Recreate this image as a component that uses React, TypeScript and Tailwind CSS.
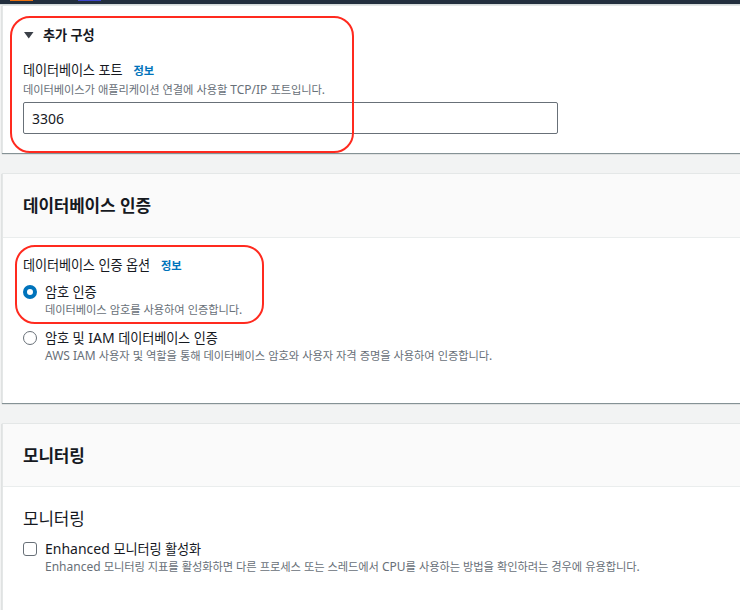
import React from "react";

function K({ t }: { t: string }) {
  const parts = t.split(/([\uAC00-\uD7A3]+)/);
  return (
    <span>
      {parts.map((p, i) =>
        /[\uAC00-\uD7A3]/.test(p) ? (
          <span key={i} className="text-[0.94em] tracking-[-0.01em]">
            {p}
          </span>
        ) : (
          <React.Fragment key={i}>{p}</React.Fragment>
        )
      )}
    </span>
  );
}

function Info() {
  return (
    <span className="ml-[11px] text-[12px] font-bold text-[#0073bb]">
      <K t="정보" />
    </span>
  );
}

const card =
  "relative ml-[2px] bg-white border-t border-l border-[#e4e7e7] shadow-[0_1px_1px_0_rgba(0,28,36,0.45)]";

export default function App() {
  return (
    <div
      className="min-h-screen w-[740px] overflow-hidden bg-[#f2f3f3] text-[#16191f]"
      style={{ fontFamily: '"Noto Sans", "Noto Sans CJK KR", sans-serif' }}
    >
      {/* top bar */}
      <div className="flex h-[4px] items-start bg-[#232f3e]">
        <div className="ml-[10px] h-[1px] w-[23px] bg-[#ec7211]" />
        <div className="ml-[45px] h-[1px] w-[23px] bg-[#3f48cc]" />
      </div>
      <div className="h-[1px] bg-[#d5dbdb]" />

      {/* Card 1: additional config */}
      <section className={card + " pl-[20px] pt-[19px] pb-[19px]"}>
        <div className="flex h-[20px] items-center text-[14px] font-bold leading-[20px]">
          <svg width="10" height="7" viewBox="0 0 10 7" className="ml-[1px] mr-[9px]">
            <path d="M0 0 H9.5 L4.75 6.5 Z" fill="#3b4048" />
          </svg>
          <K t="추가 구성" />
        </div>
        <div className="mt-[15px] flex items-baseline text-[14px] leading-[20px]">
          <K t="데이터베이스 포트" />
          <Info />
        </div>
        <div className="mt-[1px] text-[12px] leading-[16px] text-[#687078]">
          <K t="데이터베이스가 애플리케이션 연결에 사용할 TCP/IP 포트입니다." />
        </div>
        <div className="mt-[4px] flex h-[32px] w-[535px] items-center rounded-[2px] border border-[#687078] px-[8px] text-[14px]">
          3306
        </div>
        <div className="pointer-events-none absolute left-[7px] top-[10px] h-[137px] w-[344px] rounded-[20px] border-2 border-[#ff2a1f]" />
      </section>

      {/* Card 2: DB auth */}
      <section className={card + " mt-[20px]"}>
        <div className="flex h-[64px] items-center border-b border-[#eaeded] bg-[#fafafa] pl-[20px] text-[18px] font-bold">
          <K t="데이터베이스 인증" />
        </div>
        <div className="pl-[20px] pt-[17px] pb-[39px]">
          <div className="flex items-baseline text-[14px] leading-[20px]">
            <K t="데이터베이스 인증 옵션" />
            <Info />
          </div>
          <div className="mt-[6px] flex items-center text-[14px] leading-[20px]">
            <span className="mr-[8px] box-border h-[14px] w-[14px] rounded-full border-[4px] border-[#0073bb] bg-white" />
            <K t="암호 인증" />
          </div>
          <div className="pl-[22px] text-[12px] leading-[16px] text-[#687078]">
            <K t="데이터베이스 암호를 사용하여 인증합니다." />
          </div>
          <div className="mt-[10px] flex items-center text-[14px] leading-[20px]">
            <span className="mr-[8px] box-border h-[14px] w-[14px] rounded-full border-[1.5px] border-[#687078] bg-white" />
            <K t="암호 및 IAM 데이터베이스 인증" />
          </div>
          <div className="pl-[22px] text-[12px] leading-[16px] text-[#687078]">
            <K t="AWS IAM 사용자 및 역할을 통해 데이터베이스 암호와 사용자 자격 증명을 사용하여 인증합니다." />
          </div>
        </div>
        <div className="pointer-events-none absolute left-[12px] top-[71px] h-[79px] w-[249px] rounded-[20px] border-2 border-[#ff2a1f]" />
      </section>

      {/* Card 3: monitoring */}
      <section className={card + " mt-[20px]"}>
        <div className="flex h-[63px] items-center border-b border-[#eaeded] bg-[#fafafa] pl-[20px] text-[18px] font-bold">
          <K t="모니터링" />
        </div>
        <div className="pl-[20px] pt-[19px] pb-[40px]">
          <div className="text-[18px] leading-[24px]">
            <K t="모니터링" />
          </div>
          <div className="mt-[8px] flex items-center text-[14px] leading-[20px]">
            <span className="mr-[8px] box-border h-[14px] w-[14px] rounded-[3px] border-[1.5px] border-[#687078] bg-white" />
            <K t="Enhanced 모니터링 활성화" />
          </div>
          <div className="pl-[22px] text-[12px] leading-[16px] text-[#687078]">
            <K t="Enhanced 모니터링 지표를 활성화하면 다른 프로세스 또는 스레드에서 CPU를 사용하는 방법을 확인하려는 경우에 유용합니다." />
          </div>
        </div>
      </section>
    </div>
  );
}
